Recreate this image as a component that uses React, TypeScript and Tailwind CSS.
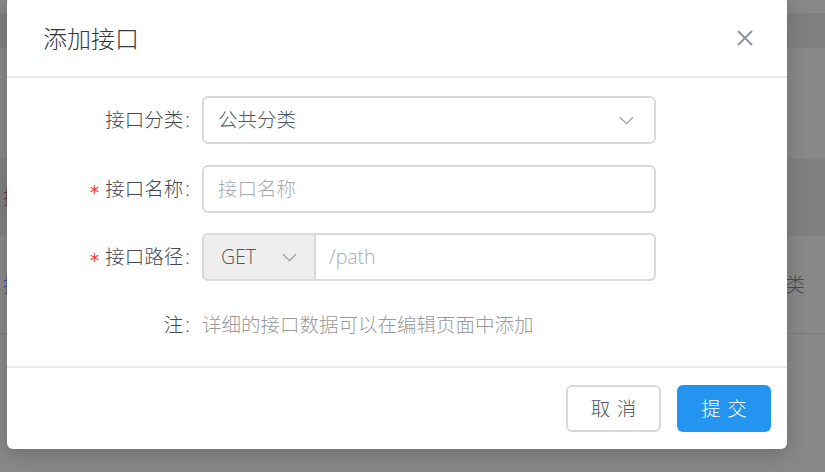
import React from "react";

const FONT = { fontFamily: '"Open Sans", "Noto Sans CJK SC", sans-serif' };

function Chevron() {
  return (
    <svg width="15" height="9" viewBox="0 0 15 9" fill="none">
      <path d="M1 1.2 L7.5 7.6 L14 1.2" stroke="#9aa1a9" strokeWidth="1.3" />
    </svg>
  );
}

function Label({ text, required }: { text: string; required?: boolean }) {
  return (
    <div className="w-[183px] shrink-0 flex justify-end items-center text-[19.5px] leading-[30px] text-[#454a50]">
      {required && (
        <span className="text-[#f04134] mr-[6px] translate-y-[3px] text-[19px] font-normal font-['DejaVu_Sans']">*</span>
      )}
      <span>{text}</span>
      <span className="ml-[2px]">:</span>
    </div>
  );
}

export default function App() {
  return (
    <div className="relative w-[825px] h-[472px] overflow-hidden bg-[#888888] font-light" style={FONT}>
      {/* masked page behind */}
      <div className="flex flex-col h-full">
        <div className="h-[13px] bg-[#888888]" />
        <div className="h-[35px] bg-[#7f7f7f]" />
        <div className="h-[110px] bg-[#888888]" />
        <div className="h-[78px] bg-[#808080] flex items-center">
          <span className="ml-[3px] text-[19.5px] text-[#5e3a3a]">接口</span>
        </div>
        <div className="h-[97px] bg-[#888888] flex items-center justify-between pr-[20px]">
          <span className="ml-[3px] text-[19.5px] text-[#34518a]">接口</span>
          <span className="text-[19.5px] text-[#4a4a4a]">公共分类</span>
        </div>
        <div className="h-px bg-[#7b7b7b]" />
        <div className="flex-1 bg-[#888888]" />
      </div>

      {/* modal */}
      <div className="absolute left-[7px] top-[-4px] w-[780px] bg-white rounded-[6px] shadow-[0_6px_20px_rgba(0,0,0,0.18)] flex flex-col">
        <div className="h-[82px] border-b-2 border-[#e9e9e9] flex items-center justify-between pl-[36px] pr-[34px] pt-[4px]">
          <span className="text-[24px] leading-[33px] text-[#34393f]">添加接口</span>
          <svg width="16" height="16" viewBox="0 0 16 16">
            <path d="M1 1 L15 15 M15 1 L1 15" stroke="#8b96a3" strokeWidth="2" />
          </svg>
        </div>

        <div className="flex flex-col pt-[18px] pb-[26px]">
          <div className="flex items-center h-[48px]">
            <Label text="接口分类" />
            <div className="ml-[12px] w-[454px] h-full border-2 border-[#d9d9d9] rounded-[6px] flex items-center justify-between pl-[14px] pr-[20px] text-[19.5px] text-[#535a62]">
              <span>公共分类</span>
              <Chevron />
            </div>
          </div>

          <div className="flex items-center h-[48px] mt-[20.5px]">
            <Label text="接口名称" required />
            <div className="ml-[12px] w-[454px] h-full border-2 border-[#d9d9d9] rounded-[6px] flex items-center pl-[14px] text-[19.5px] text-[#a7abb0]">
              <span>接口名称</span>
            </div>
          </div>

          <div className="flex items-center h-[48px] mt-[20.5px]">
            <Label text="接口路径" required />
            <div className="ml-[12px] w-[454px] h-full flex">
              <div className="w-[114px] h-full bg-[#eeeeee] border-2 border-[#d9d9d9] rounded-l-[6px] flex items-center justify-between pl-[17px] pr-[17px] text-[19.5px] text-[#4f565e]">
                <span>GET</span>
                <Chevron />
              </div>
              <div className="flex-1 h-full border-2 border-l-0 border-[#d9d9d9] rounded-r-[6px] flex items-center pl-[13px] text-[19.5px] text-[#a7abb0]">
                <span>/path</span>
              </div>
            </div>
          </div>

          <div className="flex items-center mt-[29px] h-[30px]">
            <div className="w-[183px] shrink-0 flex justify-end text-[19.5px] leading-[30px] text-[#454a50]">
              <span>注</span>
              <span className="ml-[2px]">:</span>
            </div>
            <div className="ml-[12px] text-[19.5px] leading-[30px] text-[#9a9a9a]">
              详细的接口数据可以在编辑页面中添加
            </div>
          </div>
        </div>

        <div className="border-t-2 border-[#e9e9e9] flex justify-end gap-[16px] pt-[17px] pb-[17px] pr-[16px]">
          <button className="w-[95px] h-[47px] border-2 border-[#d9d9d9] rounded-[6px] bg-white text-[19.5px] text-[#4f565e] flex items-center justify-center">
            <span className="tracking-[0.34em] -mr-[0.34em]">取消</span>
          </button>
          <button className="w-[94px] h-[47px] rounded-[6px] bg-[#2395f1] text-[19.5px] text-white flex items-center justify-center">
            <span className="tracking-[0.34em] -mr-[0.34em]">提交</span>
          </button>
        </div>
      </div>
    </div>
  );
}
